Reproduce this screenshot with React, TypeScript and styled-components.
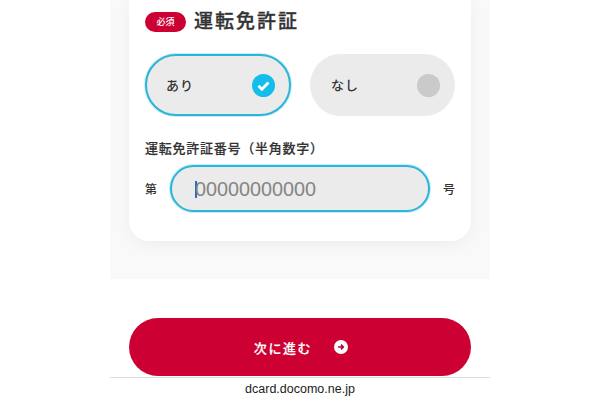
import React from 'react';
import styled, { createGlobalStyle } from 'styled-components';

const GlobalStyle = createGlobalStyle`
  html, body {
    margin: 0;
    padding: 0;
    background: #fff;
  }
  body {
    font-family: 'Inter', 'Noto Sans CJK JP', sans-serif;
    color: #333;
  }
`;

const Page = styled.div`
  width: 600px;
  height: 400px;
  overflow: hidden;
  display: flex;
  flex-direction: column;
  align-items: center;
`;

const Panel = styled.div`
  width: 380px;
  height: 279px;
  box-sizing: border-box;
  padding: 0 19px;
  background: #f9f9f9;
`;

const Card = styled.div`
  height: 241px;
  box-sizing: border-box;
  padding: 12px 16px 0;
  background: #fff;
  border-radius: 0 0 20px 20px;
  box-shadow: 0 4px 16px rgba(0, 0, 0, 0.05);
`;

const TitleRow = styled.div`
  display: flex;
  align-items: center;
  gap: 8px;
  height: 20px;
`;

const Badge = styled.span`
  width: 41px;
  height: 20px;
  border-radius: 10px;
  background: #cc0033;
  color: #fff;
  font-size: 9px;
  font-weight: 500;
  line-height: 20px;
  text-align: center;
`;

const Title = styled.h2`
  margin: 0;
  font-size: 19px;
  font-weight: 500;
  -webkit-text-stroke: 0.3px #333;
  letter-spacing: 2px;
  line-height: 20px;
  color: #333;
`;

const Choices = styled.div`
  display: flex;
  justify-content: space-between;
  margin-top: 22px;
`;

const Choice = styled.div<{ $active?: boolean }>`
  width: ${({ $active }) => ($active ? '146px' : '145px')};
  height: 62px;
  box-sizing: border-box;
  display: flex;
  align-items: center;
  justify-content: space-between;
  padding: ${({ $active }) => ($active ? '0 14px 0 19px' : '0 15px 0 21px')};
  border-radius: 31px;
  background: #ebebeb;
  border: ${({ $active }) => ($active ? '2px solid #2cb5d6' : 'none')};
  box-shadow: ${({ $active }) => ($active ? '0 0 0 1px #c4eef8' : 'none')};
  font-size: 13px;
  font-weight: 500;
  letter-spacing: 1px;
`;

const ChoiceLabel = styled.span`
  padding-bottom: 2px;
`;

const Knob = styled.span`
  width: 23px;
  height: 23px;
  border-radius: 50%;
  background: #cacaca;
`;

const FieldLabel = styled.div`
  margin-top: 23px;
  font-size: 13px;
  font-weight: 500;
  -webkit-text-stroke: 0.2px #333;
  line-height: 18px;
  letter-spacing: 0.75px;
`;

const InputRow = styled.div`
  display: flex;
  align-items: center;
  justify-content: space-between;
  margin-top: 8px;
`;

const Affix = styled.span`
  font-size: 12px;
  font-weight: 500;
`;

const InputBox = styled.div`
  width: 260px;
  height: 47px;
  box-sizing: border-box;
  display: flex;
  align-items: center;
  padding: 1px 0 0 23px;
  border-radius: 24px;
  background: #ebebeb;
  border: 2px solid #2cb5d6;
  box-shadow: 0 0 0 1px #c4eef8;
`;

const Caret = styled.span`
  width: 2px;
  height: 17px;
  margin-right: -2px;
  background: #2a70b8;
`;

const Placeholder = styled.span`
  font-family: 'Liberation Sans', sans-serif;
  font-size: 19.8px;
  color: #858585;
`;

const NextButton = styled.button`
  width: 342px;
  height: 58px;
  margin-top: 39px;
  flex-shrink: 0;
  display: flex;
  align-items: center;
  justify-content: center;
  gap: 22px;
  padding-left: 8px;
  border: none;
  border-radius: 29px;
  background: #cc0033;
  color: #fff;
  font-family: inherit;
  font-size: 13px;
  font-weight: 500;
  -webkit-text-stroke: 0.2px #fff;
  letter-spacing: 1.6px;
`;

const Footer = styled.footer`
  width: 380px;
  margin-top: 1px;
  border-top: 1px solid #dedede;
  font-family: 'Liberation Sans', sans-serif;
  font-size: 12.5px;
  line-height: 22px;
  text-align: center;
  color: #222;
`;

const CheckIcon = () => (
  <svg width="23" height="23" viewBox="0 0 23 23" aria-hidden="true">
    <circle cx="11.5" cy="11.5" r="11.5" fill="#14bdeb" />
    <path d="M6.5 11.8l3.4 3.4 6.6-6.6" fill="none" stroke="#fff" strokeWidth="2.8" />
  </svg>
);

const ArrowIcon = () => (
  <svg width="14" height="14" viewBox="0 0 14 14" aria-hidden="true">
    <circle cx="7" cy="7" r="7" fill="#fff" />
    <path
      d="M4 7h5.2M7 4.6L9.4 7 7 9.4"
      fill="none"
      stroke="#a50d33"
      strokeWidth="1.5"
    />
  </svg>
);

export default function App() {
  return (
    <Page>
      <GlobalStyle />
      <Panel>
        <Card>
          <TitleRow>
            <Badge>必須</Badge>
            <Title>運転免許証</Title>
          </TitleRow>
          <Choices>
            <Choice $active>
              <ChoiceLabel>あり</ChoiceLabel>
              <CheckIcon />
            </Choice>
            <Choice>
              <ChoiceLabel>なし</ChoiceLabel>
              <Knob />
            </Choice>
          </Choices>
          <FieldLabel>運転免許証番号（半角数字）</FieldLabel>
          <InputRow>
            <Affix>第</Affix>
            <InputBox>
              <Caret />
              <Placeholder>00000000000</Placeholder>
            </InputBox>
            <Affix>号</Affix>
          </InputRow>
        </Card>
      </Panel>
      <NextButton>
        次に進む
        <ArrowIcon />
      </NextButton>
      <Footer>dcard.docomo.ne.jp</Footer>
    </Page>
  );
}
